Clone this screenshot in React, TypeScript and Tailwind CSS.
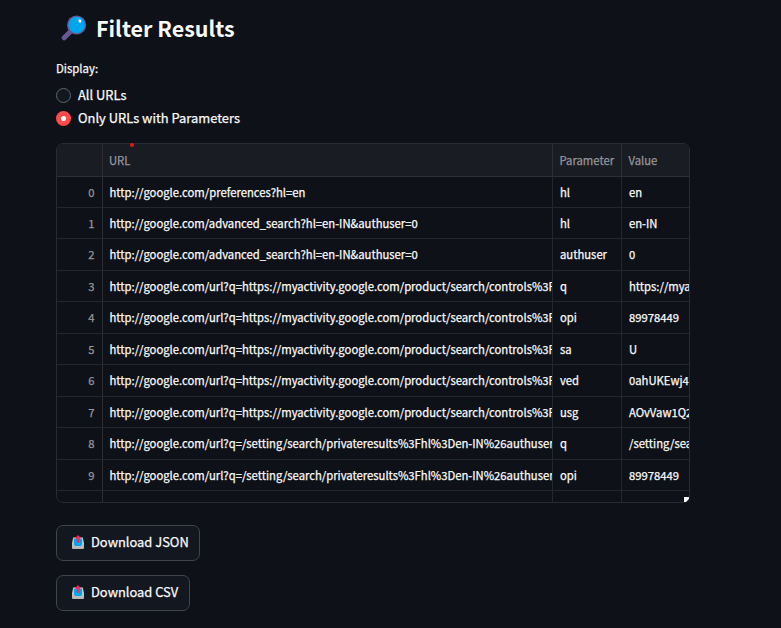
const rows: [string, string, string][] = [
  ["http://google.com/preferences?hl=en", "hl", "en"],
  ["http://google.com/advanced_search?hl=en-IN&authuser=0", "hl", "en-IN"],
  ["http://google.com/advanced_search?hl=en-IN&authuser=0", "authuser", "0"],
  ["http://google.com/url?q=https://myactivity.google.com/product/search/controls%3Fhl", "q", "https://myactivity"],
  ["http://google.com/url?q=https://myactivity.google.com/product/search/controls%3Fhl", "opi", "89978449"],
  ["http://google.com/url?q=https://myactivity.google.com/product/search/controls%3Fhl", "sa", "U"],
  ["http://google.com/url?q=https://myactivity.google.com/product/search/controls%3Fhl", "ved", "0ahUKEwj4"],
  ["http://google.com/url?q=https://myactivity.google.com/product/search/controls%3Fhl", "usg", "AOvVaw1Q2"],
  ["http://google.com/url?q=/setting/search/privateresults%3Fhl%3Den-IN%26authuser", "q", "/setting/search"],
  ["http://google.com/url?q=/setting/search/privateresults%3Fhl%3Den-IN%26authuser", "opi", "89978449"],
];

function Magnifier() {
  return (
    <svg width="26" height="26" viewBox="0 0 26 26" className="shrink-0">
      <path d="M3.2 22.8 10 16" stroke="#635994" strokeWidth="5" strokeLinecap="round" />
      <circle cx="15.6" cy="10" r="9.6" fill="#635994" />
      <circle cx="15.6" cy="10" r="8.2" fill="#00a6ed" />
      <ellipse cx="18.9" cy="5.9" rx="1.3" ry="1.7" fill="#fff" transform="rotate(-35 18.9 5.9)" />
    </svg>
  );
}

function Outbox() {
  return (
    <svg width="12" height="14" viewBox="0 0 12 14" className="mb-[2px] ml-px shrink-0">
      <path d="M1.200 2.400h9.600L12 8.500v4.100a1.200 1.200 0 0 1-1.200 1.200H1.200A1.200 1.200 0 0 1 0 12.600V8.500Z" fill="#d3d3d3" />
      <path d="M1.800 3.600h8.400v7.600H1.800Z" fill="#00a6ed" />
      <path d="M0 9.300h2l1.500 2.300h5L10 9.300h2v3.300a1.200 1.200 0 0 1-1.200 1.200H1.200A1.200 1.200 0 0 1 0 12.600Z" fill="#b9b9bb" />
      <path d="M6 0 8.200 2.500c.5.600.2 1.400-.5 1.400h-.5v2.900a1.200 1.200 0 0 1-2.400 0V3.900h-.5c-.7 0-1-.8-.5-1.400Z" fill="#f8295a" />
    </svg>
  );
}

function DownloadButton({ label, width }: { label: string; width: string }) {
  return (
    <button className={`flex h-9 items-center rounded-[7px] border border-[#41444c] bg-[#131720] pl-[14px] ${width}`}>
      <Outbox />
      <span className="ml-[7px] pb-[2px] text-[12.9px] leading-[18px] font-normal whitespace-nowrap">{label}</span>
    </button>
  );
}

export default function App() {
  return (
    <main className="h-[628px] w-[781px] overflow-hidden bg-[#0e1117] pl-14 font-['Noto_Sans_CJK_SC',sans-serif] text-[#fafafa] [-webkit-text-stroke:0.25px]">
      <h1 className="flex h-[56px] items-center pl-[5px]">
        <Magnifier />
        <span className="ml-[9px] text-[21.5px] leading-[30px] font-bold whitespace-nowrap [-webkit-text-stroke:0px]">Filter Results</span>
      </h1>
      <p className="mt-[3px] h-[18px] text-[11.4px] leading-[18px] font-normal">Display:</p>
      <div className="mt-[7px] flex h-[23px] items-center">
        <span className="size-[15px] rounded-full border border-[#62656c] bg-[#131720]" />
        <span className="ml-[7px] pb-[2px] text-[12.9px] leading-[18px] font-normal">All URLs</span>
      </div>
      <div className="flex h-[23px] items-center">
        <span className="flex size-[15px] items-center justify-center rounded-full bg-[#ff4b4b]">
          <span className="size-[5px] rounded-full bg-white" />
        </span>
        <span className="ml-[7px] pb-[2px] text-[12.9px] leading-[18px] font-normal">Only URLs with Parameters</span>
      </div>

      <div className="relative mt-[13px] w-[634px]">
        <section className="h-[360px] overflow-hidden rounded-[7px] border border-[#292b31] text-[11.28px] font-normal">
          <div className="flex h-[32.6px] border-b border-[#2d2f35] bg-[#1a1c24] leading-[32px] text-[#94969b]">
            <div className="w-[46px] shrink-0 border-r border-[#2d2f35]" />
            <div className="w-[450px] shrink-0 border-r border-[#2d2f35] pl-[6px]">URL</div>
            <div className="w-[69px] shrink-0 border-r border-[#2d2f35] pl-[6.5px]">Parameter</div>
            <div className="flex-1 pl-[6.5px]">Value</div>
          </div>
          {rows.map(([url, parameter, value], i) => (
            <div key={i} className="flex h-[31.45px] border-b border-[#24272d] leading-[30px]">
              <div className="w-[46px] shrink-0 border-r border-[#2d2f35] pr-[7.5px] text-right text-[#94969b]">{i}</div>
              <div className="w-[450px] shrink-0 overflow-hidden border-r border-[#24272d] pl-[6.5px] whitespace-nowrap">{url}</div>
              <div className="w-[69px] shrink-0 border-r border-[#24272d] pl-[7px]">{parameter}</div>
              <div className="flex-1 overflow-hidden pl-[7px] whitespace-nowrap">{value}</div>
            </div>
          ))}
          <div className="flex h-[12px]">
            <div className="w-[46px] shrink-0 border-r border-[#2d2f35]" />
            <div className="w-[450px] shrink-0 border-r border-[#24272d]" />
            <div className="w-[69px] shrink-0 border-r border-[#24272d]" />
          </div>
        </section>
        <span className="absolute top-0 left-[74px] size-[4px] rounded-full bg-[#e5191c]" />
        <svg className="absolute right-px bottom-px" width="5" height="5" viewBox="0 0 5 5">
          <path d="M5 0v2L2 5H0V0Z" fill="#fff" />
        </svg>
      </div>

      <div className="mt-[22px] flex flex-col gap-[14px]">
        <DownloadButton label="Download JSON" width="w-[144px]" />
        <DownloadButton label="Download CSV" width="w-[134px]" />
      </div>
    </main>
  );
}
